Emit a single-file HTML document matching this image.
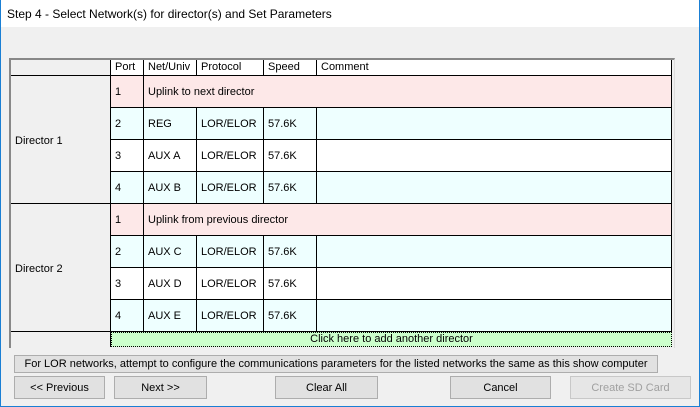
<!DOCTYPE html>
<html><head><style>
*{margin:0;padding:0;box-sizing:border-box}
body{width:700px;height:407px;background:#f0f0f0;font-family:"Liberation Sans",sans-serif;font-size:11px;color:#000;position:relative;overflow:hidden}
.a{position:absolute}
#win{left:0;top:0;width:700px;height:407px;border:1px solid #1a7fd4;border-top:none}
#title{left:1px;top:0;width:698px;height:27px;background:#fff;font-size:12px;padding:7px 0 0 6px}
.c{position:absolute;border-right:1px solid #000;border-bottom:1px solid #000;padding-left:4px;padding-top:1px;line-height:31px;white-space:nowrap}
.h{line-height:15px;padding-top:0}
.pk{background:#fde8e8}.cy{background:#eeffff}.wh{background:#fff}
.btn{position:absolute;background:#e1e1e1;border:1px solid #adadad;text-align:center;font-size:11px;padding-top:1px}
</style></head><body>
<div class="a" id="win"></div>
<div class="a" id="title">Step 4 - Select Network(s) for director(s) and Set Parameters</div>
<div class="a" style="left:9px;top:58px;width:666px;height:290px;border-top:2px solid #888;border-left:2px solid #888;border-right:1px solid #ddd"></div>
<div class="a" style="left:11px;top:60px;width:661px;height:287px;background:#fff;border-right:1px solid #000;border-left:1px solid #000"></div>
<div class="c h" style="left:11px;top:60px;width:100px;height:16px;background:#f0f0f0;border-left:0"></div>
<div class="c h wh" style="left:111px;top:60px;width:33px;height:16px">Port</div>
<div class="c h wh" style="left:144px;top:60px;width:53px;height:16px">Net/Univ</div>
<div class="c h wh" style="left:197px;top:60px;width:67px;height:16px">Protocol</div>
<div class="c h wh" style="left:264px;top:60px;width:53px;height:16px">Speed</div>
<div class="c h wh" style="left:317px;top:60px;width:355px;height:16px">Comment</div>

<div class="c" style="left:11px;top:76px;width:100px;height:128px;background:#f0f0f0;line-height:128px">Director 1</div>
<div class="c pk" style="left:111px;top:76px;width:33px;height:32px">1</div>
<div class="c pk" style="left:144px;top:76px;width:528px;height:32px">Uplink to next director</div>
<div class="c cy" style="left:111px;top:108px;width:33px;height:32px">2</div><div class="c cy" style="left:144px;top:108px;width:53px;height:32px">REG</div><div class="c cy" style="left:197px;top:108px;width:67px;height:32px">LOR/ELOR</div><div class="c cy" style="left:264px;top:108px;width:53px;height:32px">57.6K</div><div class="c cy" style="left:317px;top:108px;width:355px;height:32px"></div>
<div class="c wh" style="left:111px;top:140px;width:33px;height:32px">3</div><div class="c wh" style="left:144px;top:140px;width:53px;height:32px">AUX A</div><div class="c wh" style="left:197px;top:140px;width:67px;height:32px">LOR/ELOR</div><div class="c wh" style="left:264px;top:140px;width:53px;height:32px">57.6K</div><div class="c wh" style="left:317px;top:140px;width:355px;height:32px"></div>
<div class="c cy" style="left:111px;top:172px;width:33px;height:32px">4</div><div class="c cy" style="left:144px;top:172px;width:53px;height:32px">AUX B</div><div class="c cy" style="left:197px;top:172px;width:67px;height:32px">LOR/ELOR</div><div class="c cy" style="left:264px;top:172px;width:53px;height:32px">57.6K</div><div class="c cy" style="left:317px;top:172px;width:355px;height:32px"></div>

<div class="c" style="left:11px;top:204px;width:100px;height:128px;background:#f0f0f0;line-height:128px">Director 2</div>
<div class="c pk" style="left:111px;top:204px;width:33px;height:32px">1</div>
<div class="c pk" style="left:144px;top:204px;width:528px;height:32px">Uplink from previous director</div>
<div class="c cy" style="left:111px;top:236px;width:33px;height:32px">2</div><div class="c cy" style="left:144px;top:236px;width:53px;height:32px">AUX C</div><div class="c cy" style="left:197px;top:236px;width:67px;height:32px">LOR/ELOR</div><div class="c cy" style="left:264px;top:236px;width:53px;height:32px">57.6K</div><div class="c cy" style="left:317px;top:236px;width:355px;height:32px"></div>
<div class="c wh" style="left:111px;top:268px;width:33px;height:32px">3</div><div class="c wh" style="left:144px;top:268px;width:53px;height:32px">AUX D</div><div class="c wh" style="left:197px;top:268px;width:67px;height:32px">LOR/ELOR</div><div class="c wh" style="left:264px;top:268px;width:53px;height:32px">57.6K</div><div class="c wh" style="left:317px;top:268px;width:355px;height:32px"></div>
<div class="c cy" style="left:111px;top:300px;width:33px;height:32px">4</div><div class="c cy" style="left:144px;top:300px;width:53px;height:32px">AUX E</div><div class="c cy" style="left:197px;top:300px;width:67px;height:32px">LOR/ELOR</div><div class="c cy" style="left:264px;top:300px;width:53px;height:32px">57.6K</div><div class="c cy" style="left:317px;top:300px;width:355px;height:32px"></div>
<div class="c h" style="left:11px;top:332px;width:100px;height:15px;background:#f0f0f0;border-bottom:0"></div>
<div class="a" style="left:111px;top:332px;width:561px;height:15px;background:#ccffcc;border:1px dotted #000;text-align:center;line-height:13px">Click here to add another director</div>

<div class="btn" style="left:14px;top:355px;width:644px;height:18px;line-height:16px;padding-top:0">For LOR networks, attempt to configure the communications parameters for the listed networks the same as this show computer</div>
<div class="btn" style="left:14px;top:376px;width:91px;height:23px;line-height:21px">&lt;&lt; Previous</div>
<div class="btn" style="left:114px;top:376px;width:93px;height:23px;line-height:21px">Next &gt;&gt;</div>
<div class="btn" style="left:275px;top:376px;width:103px;height:23px;line-height:21px">Clear All</div>
<div class="btn" style="left:450px;top:376px;width:101px;height:23px;line-height:21px">Cancel</div>
<div class="btn" style="left:570px;top:376px;width:121px;height:23px;line-height:21px;color:#a0a0a0;background:#e6e6e6;border-color:#c8c8c8">Create SD Card</div>
</body></html>
